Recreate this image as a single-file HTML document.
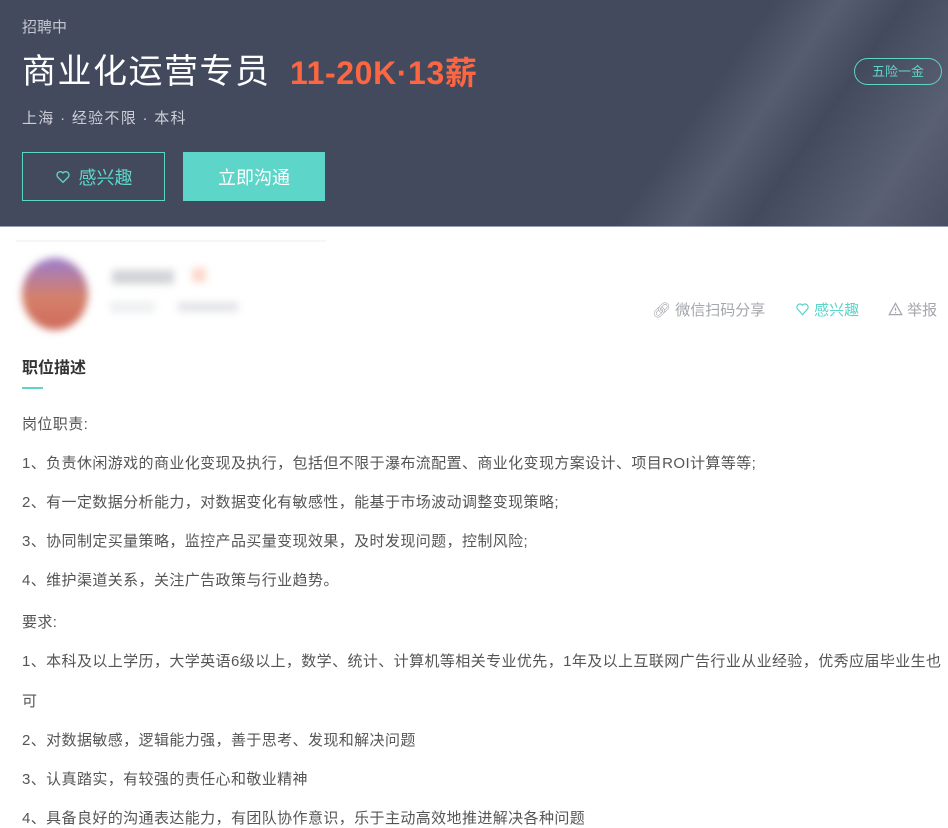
<!DOCTYPE html>
<html><head><meta charset="utf-8"><style>
*{margin:0;padding:0;box-sizing:border-box}
body{width:948px;height:820px;overflow:hidden;background:#fff;font-family:"Liberation Sans","Noto Sans CJK SC",sans-serif;position:relative}
.hd{position:absolute;left:0;top:0;width:948px;height:227px;background:linear-gradient(125deg,#444a5e 0%,#434a5e 70%,#575d70 76%,#444a5e 82%,#5a6073 92%,#4a5063 100%);border-bottom:1px solid #9aa0ad}
.a{position:absolute;white-space:nowrap}
.btn{position:absolute;top:152px;height:49px;font-size:18px;display:flex;align-items:center;justify-content:center}
.p{position:absolute;left:22px;font-size:15px;color:#555;white-space:nowrap;letter-spacing:0.4px}
.blur{position:absolute;filter:blur(4px)}
</style></head><body>
<div class="hd">
<div class="a" style="left:22px;top:16px;font-size:15px;color:#c4c7cf">招聘中</div>
<div class="a" style="left:22px;top:51px;font-size:34px;color:#fff;line-height:42px;letter-spacing:1.5px">商业化运营专员</div>
<div class="a" style="left:290px;top:52px;font-size:32px;color:#fd6640;font-weight:bold;line-height:42px;letter-spacing:0.6px">11-20K·13薪</div>
<div class="a" style="left:22px;top:107px;font-size:15px;color:#ccced5;letter-spacing:1.3px">上海 · 经验不限 · 本科</div>
<div class="btn" style="left:22px;width:143px;border:1px solid #5dd5c8;color:#5dd5c8"><svg width="16" height="16" viewBox="0 0 24 24" style="margin-right:8px"><path d="M12 20 L4 12 A4.5 4.5 0 0 1 12 6 A4.5 4.5 0 0 1 20 12 Z" fill="none" stroke="#5dd5c8" stroke-width="2"/></svg>感兴趣</div>
<div class="btn" style="left:183px;width:142px;background:#5dd5c8;color:#fff">立即沟通</div>
<div class="a" style="left:854px;top:58px;width:88px;height:27px;border:1px solid #5dd5c8;border-radius:14px;color:#5dd5c8;font-size:13px;text-align:center;line-height:25px">五险一金</div>
</div>
<div style="position:absolute;left:16px;top:240px;width:310px;height:2px;background:#f6f6f6"></div>
<div class="blur" style="left:22px;top:258px;width:66px;height:72px;border-radius:50%;background:linear-gradient(#9a7ccc,#d5806a 55%,#cf6a5a)"></div>
<div class="blur" style="left:112px;top:270px;width:62px;height:14px;background:#d2d3d8"></div>
<div class="blur" style="left:192px;top:268px;width:14px;height:14px;background:#fbd6c8"></div>
<div class="blur" style="left:110px;top:302px;width:45px;height:10px;background:#eceef0"></div>
<div class="blur" style="left:178px;top:302px;width:60px;height:10px;background:#e3e4e8"></div>
<div class="a" style="left:652px;top:299px;font-size:15px;color:#a4a6ad">🔗︎ 微信扫码分享</div>
<div class="a" style="left:795px;top:299px;font-size:15px;color:#5dd5c8"><svg width="15" height="14" viewBox="0 0 24 22" style="vertical-align:-1px"><path d="M12 20 L4 11 A4.5 4.5 0 0 1 12 5 A4.5 4.5 0 0 1 20 11 Z" fill="none" stroke="#5dd5c8" stroke-width="2"/></svg> 感兴趣</div>
<div class="a" style="left:888px;top:299px;font-size:15px;color:#a4a6ad"><svg width="15" height="14" viewBox="0 0 24 22" style="vertical-align:-1px"><path d="M12 2 L22 20 H2 Z M12 9 V14 M12 16 V18" fill="none" stroke="#a4a6ad" stroke-width="2"/></svg> 举报</div>
<div class="a" style="left:22px;top:354px;font-size:16px;font-weight:bold;color:#333">职位描述</div>
<div style="position:absolute;left:22px;top:387px;width:21px;height:2px;background:#5dd5c8"></div>
<div class="p" style="top:413px">岗位职责:</div>
<div class="p" style="top:452px">1、负责休闲游戏的商业化变现及执行，包括但不限于瀑布流配置、商业化变现方案设计、项目ROI计算等等;</div>
<div class="p" style="top:491px">2、有一定数据分析能力，对数据变化有敏感性，能基于市场波动调整变现策略;</div>
<div class="p" style="top:530px">3、协同制定买量策略，监控产品买量变现效果，及时发现问题，控制风险;</div>
<div class="p" style="top:569px">4、维护渠道关系，关注广告政策与行业趋势。</div>
<div class="p" style="top:611px">要求:</div>
<div class="p" style="top:650px">1、本科及以上学历，大学英语6级以上，数学、统计、计算机等相关专业优先，1年及以上互联网广告行业从业经验，优秀应届毕业生也</div>
<div class="p" style="top:690px">可</div>
<div class="p" style="top:729px">2、对数据敏感，逻辑能力强，善于思考、发现和解决问题</div>
<div class="p" style="top:768px">3、认真踏实，有较强的责任心和敬业精神</div>
<div class="p" style="top:807px">4、具备良好的沟通表达能力，有团队协作意识，乐于主动高效地推进解决各种问题</div>
</body></html>
